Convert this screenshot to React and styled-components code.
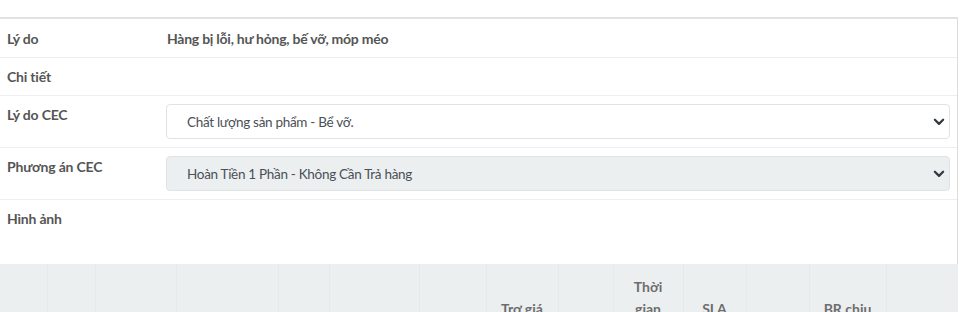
import React from "react";
import styled, { createGlobalStyle } from "styled-components";

const GlobalStyle = createGlobalStyle`
  html, body {
    margin: 0;
    padding: 0;
    background: #fff;
  }
  body {
    font-family: Lato, "Noto Sans", sans-serif;
    font-size: 14px;
    color: #555;
  }
`;

const Card = styled.div`
  width: 957px;
  margin-top: 17px;
  border-top: 2px solid #e2e2e2;
  border-right: 1px solid #dcdcdc;
  background: #fff;
`;

const Row = styled.div`
  display: grid;
  grid-template-columns: 166px 1fr;
  align-items: start;
  padding: 8px 7px 8px 0;
  border-bottom: 1px solid #eceeef;
  min-height: ${(p) => p.$minHeight || "auto"};
  box-sizing: border-box;

  &:first-child {
    padding-top: 9px;
  }

  &:last-of-type {
    border-bottom: none;
  }
`;

const Label = styled.div`
  padding-left: 7px;
  line-height: 21px;
  font-weight: 700;
  letter-spacing: -0.2px;
  color: #555;
`;

const Value = styled.div`
  padding-left: 1px;
  line-height: 21px;
  font-weight: 700;
  letter-spacing: -0.25px;
  color: #555;
`;

const SelectWrap = styled.div`
  position: relative;
  width: 784px;
`;

const Select = styled.select`
  appearance: none;
  width: 100%;
  height: 35px;
  padding: 0 36px 0 20px;
  border: 1px solid #dfe3e6;
  border-radius: 4px;
  background: ${(p) => (p.disabled ? "#eceff0" : "#fff")};
  color: #4a5057;
  font-family: inherit;
  font-size: 13.5px;
  letter-spacing: -0.3px;
  opacity: 1;
  outline: none;
`;

const Chevron = styled.svg`
  position: absolute;
  right: 5px;
  top: 50%;
  width: 12px;
  height: 9px;
  transform: translateY(-50%);
  pointer-events: none;
`;

const Table = styled.table`
  width: 958px;
  border-collapse: collapse;
  table-layout: fixed;
`;

const HeadCell = styled.th`
  background: #eceff0;
  border-right: 1px solid #e6e9ea;
  padding: 12px;
  vertical-align: middle;
  text-align: center;
  font-weight: 700;
  font-size: 14px;
  line-height: 22px;
  color: #6d6d6d;

  &:last-child {
    border-right: none;
  }
`;

const columns = [
  { w: 47 },
  { w: 48 },
  { w: 81 },
  { w: 102 },
  { w: 51 },
  { w: 90 },
  { w: 67 },
  { w: 72, t: "Trợ giá" },
  { w: 55 },
  { w: 70, t: "Thời gian xử lý" },
  { w: 63, t: "SLA" },
  { w: 63 },
  { w: 77, t: "BR chịu" },
  { w: 72 },
];

const SelectField = ({ value, disabled }) => (
  <SelectWrap>
    <Select defaultValue={value} disabled={disabled}>
      <option>{value}</option>
    </Select>
    <Chevron viewBox="0 0 16 12">
      <path
        d="M2.5 3 8 8.5 13.5 3"
        fill="none"
        stroke="#343a40"
        strokeWidth="3"
        strokeLinecap="round"
        strokeLinejoin="round"
      />
    </Chevron>
  </SelectWrap>
);

export default function App() {
  return (
    <>
      <GlobalStyle />
      <Card>
        <Row>
          <Label>Lý do</Label>
          <Value>Hàng bị lỗi, hư hỏng, bế vỡ, móp méo</Value>
        </Row>
        <Row>
          <Label>Chi tiết</Label>
          <Value />
        </Row>
        <Row>
          <Label>Lý do CEC</Label>
          <SelectField value="Chất lượng sản phẩm - Bể vỡ." />
        </Row>
        <Row>
          <Label>Phương án CEC</Label>
          <SelectField value="Hoàn Tiền 1 Phần - Không Cần Trả hàng" disabled />
        </Row>
        <Row $minHeight="64px">
          <Label>Hình ảnh</Label>
          <Value />
        </Row>
        <Table>
          <colgroup>
            {columns.map((c, i) => (
              <col key={i} style={{ width: c.w }} />
            ))}
          </colgroup>
          <thead>
            <tr>
              {columns.map((c, i) => (
                <HeadCell key={i}>{c.t || ""}</HeadCell>
              ))}
            </tr>
          </thead>
        </Table>
      </Card>
    </>
  );
}
